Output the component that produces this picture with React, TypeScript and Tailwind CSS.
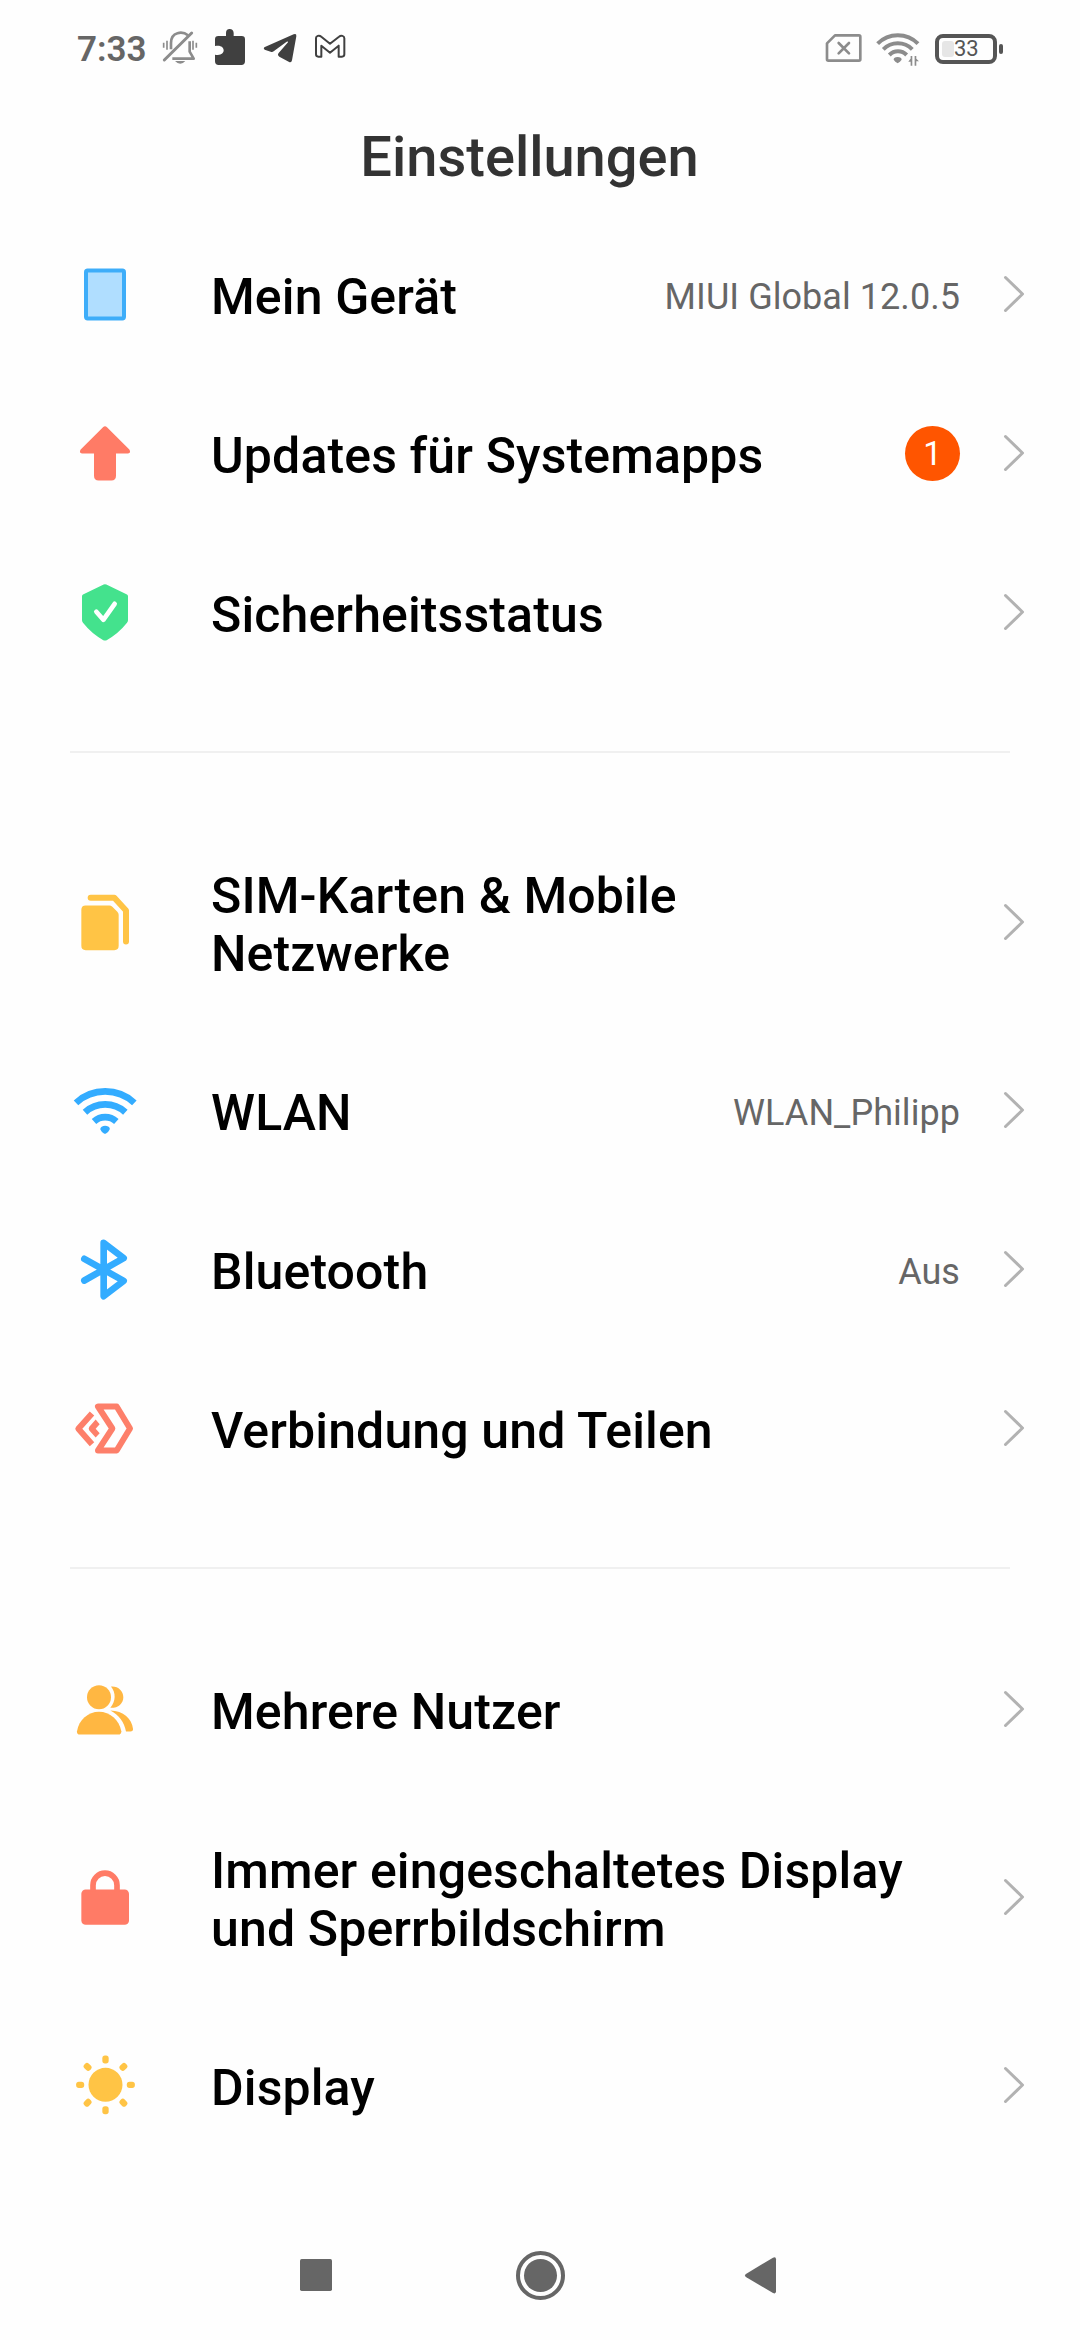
import type { ReactNode } from "react";

type Row = { label: ReactNode; icon: ReactNode; value?: string; badge?: string; tall?: boolean };

function Glyph({ viewBox, children }: { viewBox: string; children: ReactNode }) {
  return (
    <svg viewBox={viewBox} className="h-20 w-20 shrink-0" fill="none">
      {children}
    </svg>
  );
}

const deviceIcon = (
  <Glyph viewBox="15 40.5 240 240">
    <rect x="78" y="90" width="114" height="144" rx="5" fill="#b0deff" stroke="#3eadf9" strokeWidth="12" />
  </Glyph>
);

const updateIcon = (
  <Glyph viewBox="15 517.5 240 240">
    <path
      d="M129 560Q135 554 141 560L208 627Q214 638 204 639H168V706Q168 720 154 720H116Q102 720 102 706V639H66Q56 638 62 627Z"
      fill="#ff7b66"
    />
  </Glyph>
);

const shieldIcon = (
  <Glyph viewBox="15 64.5 240 240">
    <path
      d="M131 102Q135 100 139 102L201 132Q204 134 204 137V209Q204 213 201 217Q175 250 140 269Q135 271 130 269Q95 250 69 217Q66 213 66 209V137Q66 134 69 132Z"
      fill="#44e28d"
    />
    <path d="M109 184L130 208L164 160" stroke="#fff" strokeWidth="14" strokeLinecap="round" strokeLinejoin="round" />
  </Glyph>
);

const simIcon = (
  <Glyph viewBox="15 34.5 240 240">
    <path d="M77 105H148Q153 105 157 109L172 124Q176 128 176 133V226Q176 239 163 239H77Q64 239 64 226V118Q64 105 77 105Z" fill="#ffc445" />
    <path d="M92 82H163L198 120V213" stroke="#ffc445" strokeWidth="18" strokeLinecap="round" strokeLinejoin="round" />
  </Glyph>
);

const wifiIcon = (
  <Glyph viewBox="15 -1.5 240 240">
    <g stroke="#33acff" strokeWidth="20">
      <path d="M48 97A129 129 0 0 1 223 97" />
      <path d="M75 125A90 90 0 0 1 196 125" />
      <path d="M102 153A50 50 0 0 1 169 153" />
    </g>
    <path d="M121 177Q120 172 125 169Q135 163 146 169Q151 172 149 177Q146 184 138 189Q135 191 132 189Q124 184 121 177Z" fill="#33acff" />
  </Glyph>
);

const bluetoothIcon = (
  <Glyph viewBox="15 475.5 240 240">
    <path
      d="M73 565L191 631L131 677V517L191 563L73 630"
      stroke="#33acff"
      strokeWidth="20"
      strokeLinecap="round"
      strokeLinejoin="round"
    />
  </Glyph>
);

const shareIcon = (
  <Glyph viewBox="15 22.5 240 240">
    <g stroke="#fd7f6a" strokeWidth="18" strokeLinejoin="round">
      <path d="M114 78H170L210 144L170 210H114L157 144Z" />
      <path d="M96 99L55 145L96 191" />
    </g>
    <path d="M107 117L119 131L107 145L119 158L107 171L88 150Q84 145 88 139Z" fill="#fd7f6a" />
  </Glyph>
);

const usersIcon = (
  <Glyph viewBox="15 -4.5 240 240">
    <g fill="#ffb742">
      <circle cx="117" cy="80" r="36" />
      <path d="M60 192Q50 192 51 182C57 148 84 124 117 124S177 148 184 182Q184 192 175 192Z" />
      <path d="M153 48C174 46 190 61 190 80S174 113 151 112C168 92 168 67 153 48Z" />
      <path d="M151 120C190 120 216 145 219 175Q220 183 211 183H198C193 155 176 132 151 120Z" />
    </g>
  </Glyph>
);

const lockIcon = (
  <Glyph viewBox="15 19.5 240 240">
    <rect x="64" y="117" width="143" height="106" rx="13" fill="#ff7b66" />
    <path d="M99 122V104A36 36 0 0 1 171 104V122" stroke="#ff7b66" strokeWidth="17" />
  </Glyph>
);

const rayAngles = [0, 45, 90, 135, 180, 225, 270, 315];

const sunIcon = (
  <Glyph viewBox="15 583.5 240 240">
    <circle cx="136.500" cy="703" r="51" fill="#ffc445" />
    {rayAngles.map((a) => (
      <rect key={a} x="127" y="615" width="19" height="24" rx="8" fill="#ffc445" transform={`rotate(${a} 136.5 703)`} />
    ))}
  </Glyph>
);

const groups: Row[][] = [
  [
    { label: "Mein Gerät", icon: deviceIcon, value: "MIUI Global 12.0.5" },
    { label: "Updates für Systemapps", icon: updateIcon, badge: "1" },
    { label: "Sicherheitsstatus", icon: shieldIcon },
  ],
  [
    { label: <>SIM-Karten &amp; Mobile<br />Netzwerke</>, icon: simIcon, tall: true },
    { label: "WLAN", icon: wifiIcon, value: "WLAN_Philipp" },
    { label: "Bluetooth", icon: bluetoothIcon, value: "Aus" },
    { label: "Verbindung und Teilen", icon: shareIcon },
  ],
  [
    { label: "Mehrere Nutzer", icon: usersIcon },
    { label: <>Immer eingeschaltetes Display<br />und Sperrbildschirm</>, icon: lockIcon, tall: true },
    { label: "Display", icon: sunIcon },
  ],
];

function SettingsRow({ row }: { row: Row }) {
  return (
    <div className={`flex items-center pr-[55px] pl-[65px] ${row.tall ? "h-[217px]" : "h-[159px]"}`}>
      {row.icon}
      <div className="ml-[66px] flex-1 pt-1.5 text-[50px] leading-[58px] font-medium tracking-[0.13px] whitespace-nowrap text-black">
        {row.label}
      </div>
      {row.value && (
        <div className="pt-1.5 text-[36px] leading-[42px] tracking-[0.05px] whitespace-nowrap text-[#666]">{row.value}</div>
      )}
      {row.badge && (
        <div className="mt-0.5 flex h-[55px] w-[55px] items-center justify-center rounded-full bg-[#ff5500] text-[33px] leading-none text-white">
          {row.badge}
        </div>
      )}
      <svg viewBox="0 0 22 38" className="mt-px ml-[43px] h-[38px] w-[22px] shrink-0" fill="none">
        <path d="M2.500 2.500L19.500 19L2.500 35.500" stroke="#b2b2b2" strokeWidth="3" strokeLinecap="round" strokeLinejoin="round" />
      </svg>
    </div>
  );
}

function StatusBar() {
  return (
    <header className="flex h-[98px] items-center pr-[77px] pl-[77px]">
      <span className="w-[73px] text-[35px] leading-[41px] font-semibold whitespace-nowrap text-[#666]">7:33</span>
      <svg viewBox="270 0 600 180" className="h-[60px] w-[200px] shrink-0" fill="none">
        <g stroke="#8c8c8c" strokeWidth="8">
          <path d="M313 123L395 42" strokeWidth="9" strokeLinecap="round" />
          <path d="M333 91V72C333 37 368 36 384 49" />
          <path d="M337 119H401L389 98V67" strokeLinejoin="round" />
          <path d="M321 65V92M311 71V86M399 65V92M409 71V86" strokeWidth="5" />
        </g>
        <path d="M345 126H376Q361 143 345 126Z" fill="#8c8c8c" />
        <path
          d="M475 51H498V42Q498 30 509 30T521 42V51H545Q555 51 555 61V127Q555 138 544 138H476Q465 138 465 127V107C482 111 491 103 491 94S482 77 465 81V61Q465 51 475 51Z"
          fill="#404040"
        />
        <path d="M613 85L701 46Q710 42 709 52L696 124Q694 133 686 128L658 113Q651 108 656 102L684 70Q685 66 680 68L641 97Q637 100 632 98L614 92Q609 89 613 85Z" fill="#404040" />
        <path
          d="M768 57V106Q768 113 775 113H784V80L810 101L836 80V113H846Q853 113 853 106V58C853 50 843 48 837 53L810 74L784 53C777 47 768 51 768 57Z"
          stroke="#404040"
          strokeWidth="6"
          strokeLinejoin="round"
        />
      </svg>
      <div className="flex-1" />
      <svg viewBox="40 0 295 180" className="h-[60px] w-[98.300px] shrink-0" fill="none">
        <path d="M76 49H148Q152 49 152 53V121Q152 125 148 125H56Q52 125 52 121V73Z" stroke="#8c8c8c" strokeWidth="8" strokeLinejoin="round" />
        <path d="M87 72L118 103M118 72L87 103" stroke="#8c8c8c" strokeWidth="8" strokeLinecap="round" />
        <g stroke="#8c8c8c" strokeWidth="12">
          <path d="M204 74A85 85 0 0 1 325 74" />
          <path d="M221 91A61 61 0 0 1 308 91" />
          <path d="M239 108A36 36 0 0 1 291 108" />
        </g>
        <path d="M252 122Q252 114 264 114T276 122Q272 128 264 133Q256 128 252 122Z" fill="#8c8c8c" />
        <path d="M296 128L306 115V139H303V128ZM303 111H308V140H303ZM315 111H320V140H315ZM320 119L328 127H320Z" fill="#8c8c8c" />
      </svg>
      <div className="ml-[13.300px] flex h-[30px] w-[62px] items-center rounded-[8px] border-4 border-[#555] pl-[3px]">
        <div className="h-4 w-3 rounded-[3px] bg-[#e6e6e6]" />
        <span className="text-[22px] leading-none text-[#555]">33</span>
      </div>
      <div className="ml-0.5 h-[10px] w-1 rounded-sm bg-[#555]" />
    </header>
  );
}

export default function App() {
  return (
    <div className="flex h-[2340px] w-[1080px] flex-col overflow-hidden bg-[#fefefe] font-[Roboto,sans-serif]">
      <StatusBar />
      <h1 className="h-[116px] pt-[26px] pr-[21px] text-center text-[56px] leading-[66px] font-medium text-[#333]">
        Einstellungen
      </h1>
      <main className="flex flex-col">
        {groups.map((rows, i) => (
          <section key={i}>
            {i > 0 && <div className="mx-[70px] my-[60px] h-0.5 bg-[#f0f0f0]" />}
            {rows.map((row, j) => (
              <SettingsRow key={j} row={row} />
            ))}
          </section>
        ))}
      </main>
      <nav className="mt-[66px] px-[280px]">
        <svg viewBox="0 0 1560 270" className="h-[90px] w-[520px]" fill="none">
          <rect x="60" y="87" width="96" height="96" rx="5" fill="#666" />
          <circle cx="781.500" cy="136.500" r="67.500" stroke="#666" strokeWidth="12" />
          <circle cx="781.500" cy="136.500" r="49.500" fill="#666" />
          <path d="M1399 131L1479 83Q1488 79 1488 88V184Q1488 193 1479 189L1399 142Q1391 136 1399 131Z" fill="#666" />
        </svg>
      </nav>
    </div>
  );
}
